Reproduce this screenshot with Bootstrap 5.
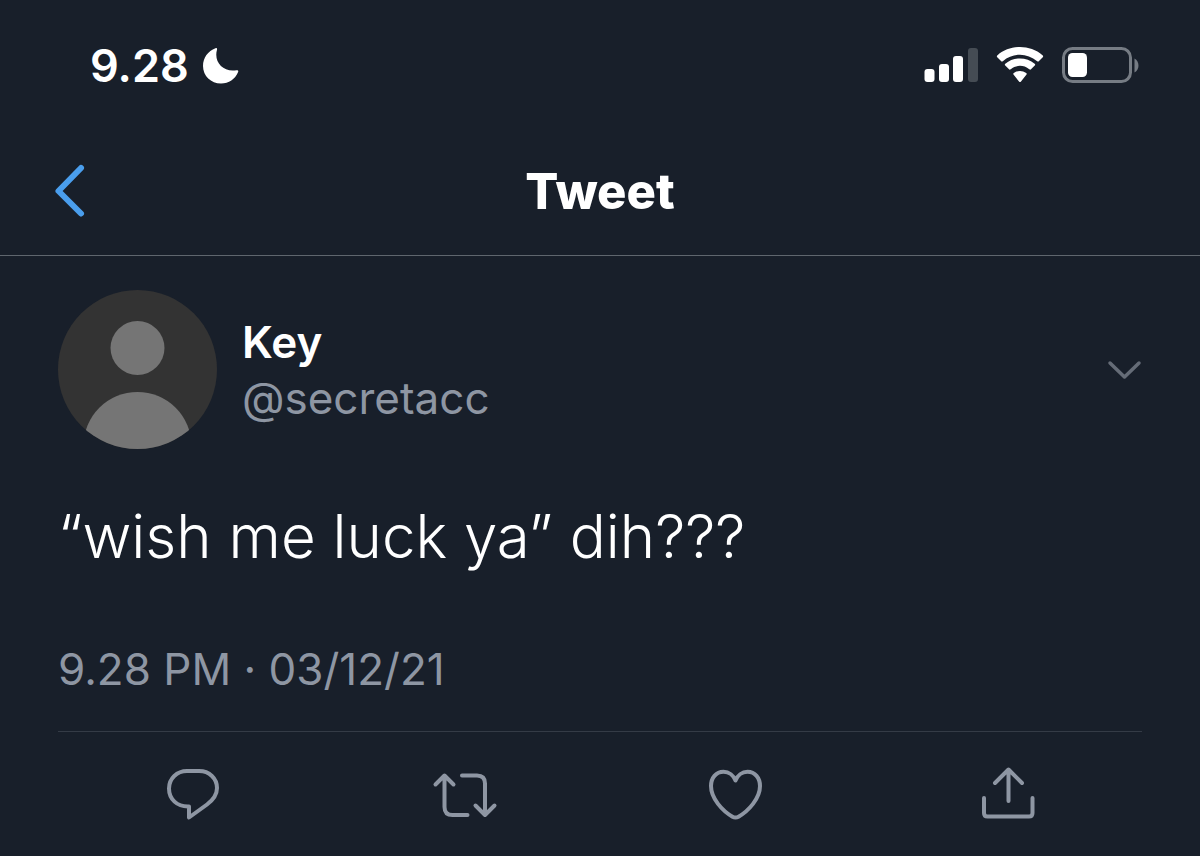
<!DOCTYPE html>
<html lang="id" data-bs-theme="dark">
<head>
<meta charset="utf-8">
<meta name="viewport" content="width=device-width, initial-scale=1">
<title>Tweet</title>
<link href="https://cdn.jsdelivr.net/npm/bootstrap@5.3.0/dist/css/bootstrap.min.css" rel="stylesheet">
<style>
  body { background: #181f2a; color: #fff; font-family: Inter, "Liberation Sans", sans-serif; font-size: 44px; line-height: 56px; }
  svg { display: block; flex-shrink: 0; }
  .status-bar { height: 132px; padding: 0 60px 0 90px; }
  .status-time { font-weight: 600; font-size: 45px; }
  .time-group { gap: 14px; }
  .title-bar { height: 124px; padding: 0 50px 3px; border-bottom: 1px solid #5f666e; }
  .title-bar h1 { font-size: 49px; font-weight: 800; }
  .title-side { width: 60px; }
  .tweet { padding: 34px 58px 0; }
  .display-name { font-weight: 600; }
  .profile { gap: 24px; }
  .muted { color: #8e96a3; }
  .tweet-text { font-size: 60px; line-height: 80px; font-weight: 300; margin-top: 46px; }
  .stamp { margin-top: 65px; }
  .actions { margin-top: 34px; border-top: 1px solid #343b46; padding: 30px 0 28px; }
  .plain { background: none; border: 0; padding: 0; color: inherit; }
</style>
</head>
<body>
<header>
  <div class="status-bar d-flex align-items-center justify-content-between">
    <div class="time-group d-flex align-items-center">
      <span class="status-time">9.28</span>
      <svg width="36" height="36" viewBox="0 0 36 36" fill="#fff" aria-hidden="true"><path d="M12.500 .3C13.600-.3 14.400 .4 14 1.700C10.500 14 20 24.500 33.500 22.200C35 22 35.700 22.800 35 24.200C32 31 26 35.500 18 35.500C8 35.500 0 28 0 18C0 10 5 3 12.500 .3Z"/></svg>
    </div>
    <div class="d-flex align-items-center">
      <svg width="216" height="40" viewBox="0 0 216 40" aria-hidden="true">
        <g fill="#fff">
          <rect x="0.500" y="23" width="10" height="13" rx="3"/>
          <rect x="15" y="18" width="10" height="18" rx="3"/>
          <rect x="29" y="10" width="10" height="26" rx="3"/>
          <rect x="44" y="2" width="10" height="34" rx="3" fill="#454c54"/>
          <path d="M73 11Q72.500 10 73.500 9.200C86-1.700 106-1.700 118.500 9.200Q119.500 10 119 11L115 15Q114.300 16 113.200 15.200C103 6.500 89 6.500 78.800 15.200Q77.700 16 77 15Z"/>
          <path d="M81 19.300Q80.500 18.500 81.300 17.800C89.500 10.700 102.500 10.700 110.700 17.800Q111.500 18.500 111 19.300L107 23.300Q106.300 24 105.300 23.200C99.500 18.700 92.500 18.700 86.700 23.200Q85.700 24 85 23.300Z"/>
          <path d="M89.500 28.500Q88.800 27.800 89.800 27C93.500 24.200 98.500 24.200 102.200 27Q103.200 27.800 102.500 28.500L97 35.500Q96 36.500 95 35.500Z"/>
          <rect x="144" y="7" width="19" height="24" rx="4.500"/>
        </g>
        <rect x="139.500" y="2.500" width="67" height="33" rx="9" fill="none" stroke="#767c84" stroke-width="3"/>
        <path d="M210.500 12.500C215.800 15.500 215.800 23.500 210.500 26.500Z" fill="#767c84"/>
      </svg>
    </div>
  </div>
  <nav class="title-bar d-flex align-items-center justify-content-between" aria-label="Tweet">
    <a class="title-side" href="#" aria-label="Back">
      <svg width="40" height="60" viewBox="0 0 40 60" fill="none" stroke="#4a9eed" stroke-width="6" stroke-linecap="round" stroke-linejoin="round"><path d="M31 6L8.500 29L31 51.500"/></svg>
    </a>
    <h1 class="m-0">Tweet</h1>
    <span class="title-side"></span>
  </nav>
</header>
<main class="tweet">
  <div class="profile d-flex align-items-center">
    <svg width="160" height="160" viewBox="0 0 160 160" role="img" aria-label="Key">
      <defs><clipPath id="disc"><circle cx="79.500" cy="79.500" r="79.500"/></clipPath></defs>
      <g clip-path="url(#disc)"><path fill="#333" d="M0 0h160v160H0z"/><circle cx="79.500" cy="58" r="27" fill="#757575"/><circle cx="79.500" cy="156" r="54" fill="#757575"/></g>
    </svg>
    <div class="flex-grow-1">
      <div class="display-name">Key</div>
      <div class="muted">@secretacc</div>
    </div>
    <button class="plain" type="button" aria-label="More">
      <svg width="36" height="28" viewBox="0 0 36 28" fill="none" stroke="#656c77" stroke-width="3.500" stroke-linecap="round" stroke-linejoin="round"><path d="M4 7L18.500 21L33 7"/></svg>
    </button>
  </div>
  <p class="tweet-text mb-0">“wish me luck ya” dih???</p>
  <p class="stamp muted mb-0">9.28 PM · 03/12/21</p>
  <div class="actions muted row g-0">
    <div class="col-3 d-flex justify-content-center"><button class="plain" type="button" aria-label="Reply">
      <svg width="80" height="66" viewBox="4 7 80 66" fill="none" stroke="currentColor" stroke-width="4" stroke-linejoin="round"><path d="M37 16H49C59.500 16 67 23.500 67 33C67 40 63 45 57 49.500L39 62.500V51.500C27 52 19 44 19 33.500C19 23.500 27 16 37 16Z"/></svg></button></div>
    <div class="col-3 d-flex justify-content-center"><button class="plain" type="button" aria-label="Retweet">
      <svg width="80" height="66" viewBox="5 7 80 66" fill="none" stroke="currentColor" stroke-width="4" stroke-linecap="round" stroke-linejoin="round"><path d="M15.500 29.500L24.500 20.500L33.500 29.500M24.500 21V52Q24.500 60 32.500 60H47.500M42 20.500H57Q65 20.500 65 28.500V59M55.500 50.500L65 60L74.500 50.500"/></svg></button></div>
    <div class="col-3 d-flex justify-content-center"><button class="plain" type="button" aria-label="Like">
      <svg width="80" height="66" viewBox="6 7 80 66" fill="none" stroke="currentColor" stroke-width="4" stroke-linejoin="round"><path d="M45.500 25.500C43.500 20.500 39 16.800 33.500 16.800C26 16.800 21 23 21 31C21 43.500 32.500 56 42.500 61.700Q45.500 63.400 48.500 61.700C58.500 56 70 43.500 70 31C70 23 65 16.800 57.500 16.800C52 16.800 47.500 20.500 45.500 25.500Z"/></svg></button></div>
    <div class="col-3 d-flex justify-content-center"><button class="plain" type="button" aria-label="Share">
      <svg width="80" height="66" viewBox="1 7 80 66" fill="none" stroke="currentColor" stroke-width="4" stroke-linecap="round" stroke-linejoin="round"><path d="M18 43V58Q18 61.500 21.500 61.500H63Q66.500 61.500 66.500 58V43M42.500 46V15M29 28L42.500 14.500L56 28"/></svg></button></div>
  </div>
</main>
<script src="https://cdn.jsdelivr.net/npm/bootstrap@5.3.0/dist/js/bootstrap.bundle.min.js"></script>
</body>
</html>
